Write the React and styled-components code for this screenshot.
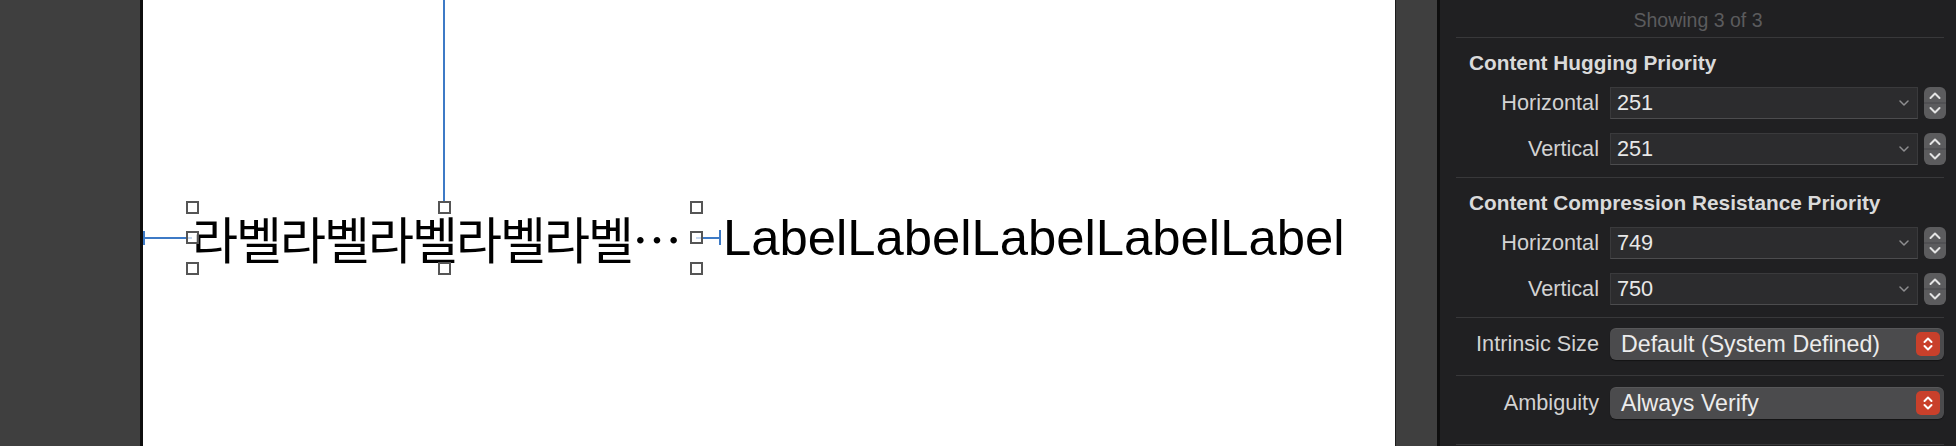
import styled, { createGlobalStyle } from "styled-components";

const GlobalStyle = createGlobalStyle`
  html, body {
    margin: 0;
    padding: 0;
    background: #202022;
  }
  body {
    font-family: "Liberation Sans", Arial, sans-serif;
  }
`;

const BLUE = "#3d7ac6";

const Window = styled.div`
  display: flex;
  width: 1956px;
  height: 446px;
  overflow: hidden;
`;

const Gutter = styled.div`
  flex: none;
  width: ${(p) => p.$width}px;
  background: #3f3f3f;
  border-left: ${(p) => p.$left || 0}px solid #1b1b1b;
  border-right: ${(p) => p.$right || 0}px solid #0e0e0e;
`;

const Canvas = styled.div`
  flex: none;
  width: 1252px;
  box-sizing: border-box;
  padding-top: 207px;
  background: #ffffff;
`;

const LabelRow = styled.div`
  display: flex;
  align-items: center;
  height: 61px;
`;

const Constraint = styled.div`
  flex: none;
  width: ${(p) => p.$width}px;
  height: ${(p) => p.$tick}px;
  box-sizing: border-box;
  margin-right: ${(p) => p.$gap || 0}px;
  background: linear-gradient(${BLUE}, ${BLUE}) center / 100% 2px no-repeat;
  border-${(p) => p.$side}: 2px solid ${BLUE};
`;

const SelectedLabel = styled.div`
  position: relative;
  flex: none;
  width: 504px;
  height: 61px;
  display: flex;
  align-items: center;
`;

const TopConstraint = styled.span`
  position: absolute;
  left: calc(50% - 1px);
  top: -207px;
  width: 2px;
  height: 201px;
  background: ${BLUE};
`;

const KoreanText = styled.span`
  display: block;
  font-family: "Noto Sans CJK KR", sans-serif;
  font-size: 50px;
  letter-spacing: -2px;
  line-height: 61px;
  color: #000;
  white-space: nowrap;
`;

const Handle = styled.span`
  position: absolute;
  left: calc(${(p) => p.$x}% - 6.5px);
  top: calc(${(p) => p.$y}% - 6.5px);
  width: 13px;
  height: 13px;
  box-sizing: border-box;
  border: 2px solid #555555;
  background: rgba(255, 255, 255, 0.7);
`;

const LatinLabel = styled.span`
  flex: none;
  font-family: "Liberation Sans", Arial, sans-serif;
  font-size: 50.8px;
  line-height: 61px;
  color: #000;
  white-space: nowrap;
`;

const Inspector = styled.div`
  flex: 1;
  display: flex;
  flex-direction: column;
  background: #202022;
`;

const ShowingHeader = styled.div`
  height: 37px;
  box-sizing: border-box;
  padding-top: 3px;
  display: flex;
  align-items: center;
  justify-content: center;
  font-size: 19.5px;
  color: #5b5b5d;
`;

const Divider = styled.div`
  height: 1px;
  margin: 0 12px 0 16px;
  background: #38383a;
`;

const Section = styled.div`
  padding: ${(p) => p.$top}px 0 ${(p) => p.$bottom}px;
`;

const SectionTitle = styled.div`
  padding-left: 29px;
  font-size: 20.8px;
  font-weight: bold;
  line-height: 24px;
  color: #dadada;
`;

const Rows = styled.div`
  display: flex;
  flex-direction: column;
  gap: 14px;
  margin-top: 12px;
`;

const Row = styled.div`
  display: flex;
  align-items: center;
  height: 32px;
  padding-left: 16px;
`;

const RowLabel = styled.div`
  flex: none;
  width: 143px;
  margin-right: 11px;
  text-align: right;
  font-size: 21.7px;
  color: #d2d2d2;
  white-space: nowrap;
`;

const ComboField = styled.div`
  flex: none;
  width: 308px;
  height: 32px;
  box-sizing: border-box;
  display: flex;
  align-items: center;
  justify-content: space-between;
  padding: 0 8px 0 6px;
  background: #2c2c2e;
  border: 1px solid #3a3a3c;
  border-bottom-color: #4c4c4e;
  font-size: 21.7px;
  color: #e8e8e8;
`;

const Stepper = styled.div`
  flex: none;
  display: flex;
  margin-left: 6px;
`;

const PopupButton = styled.div`
  flex: none;
  width: 334px;
  height: 32px;
  box-sizing: border-box;
  display: flex;
  align-items: center;
  justify-content: space-between;
  padding: 0 4px 0 11px;
  border-radius: 6px;
  background: #4b4b4d;
  box-shadow: inset 0 1px 0 rgba(255, 255, 255, 0.07), 0 1px 1px rgba(0, 0, 0, 0.4);
  font-size: 23.2px;
  color: #ececec;
  white-space: nowrap;
`;

const ChevronDown = () => (
  <svg width="10" height="6" viewBox="0 0 10 6">
    <path d="M1 1l4 4 4-4" fill="none" stroke="#8e8e90" strokeWidth="1.5" strokeLinecap="round" strokeLinejoin="round" />
  </svg>
);

const StepperIcon = () => (
  <svg width="22" height="32" viewBox="0 0 22 32">
    <rect x="0" y="0" width="22" height="32" rx="6" fill="#5c5c5e" />
    <line x1="0" y1="16" x2="22" y2="16" stroke="#47474a" strokeWidth="1" />
    <path d="M6.5 11l4.5-4.5 4.5 4.5" fill="none" stroke="#e4e4e4" strokeWidth="2" strokeLinecap="round" strokeLinejoin="round" />
    <path d="M6.5 21l4.5 4.5 4.5-4.5" fill="none" stroke="#e4e4e4" strokeWidth="2" strokeLinecap="round" strokeLinejoin="round" />
  </svg>
);

const PopupArrows = () => (
  <svg width="24" height="24" viewBox="0 0 24 24">
    <rect x="0" y="0" width="24" height="24" rx="5" fill="#c9402b" />
    <path d="M8.5 10l3.5-3.5 3.5 3.5" fill="none" stroke="#ffffff" strokeWidth="2" strokeLinecap="round" strokeLinejoin="round" />
    <path d="M8.5 14l3.5 3.5 3.5-3.5" fill="none" stroke="#ffffff" strokeWidth="2" strokeLinecap="round" strokeLinejoin="round" />
  </svg>
);

const PriorityRow = ({ label, value }) => (
  <Row>
    <RowLabel>{label}</RowLabel>
    <ComboField>
      <span>{value}</span>
      <ChevronDown />
    </ComboField>
    <Stepper>
      <StepperIcon />
    </Stepper>
  </Row>
);

const PopupRow = ({ label, value }) => (
  <Row>
    <RowLabel>{label}</RowLabel>
    <PopupButton>
      <span>{value}</span>
      <PopupArrows />
    </PopupButton>
  </Row>
);

const handles = [
  [0, 0], [50, 0], [100, 0],
  [0, 50], [100, 50],
  [0, 100], [50, 100], [100, 100],
];

export default function App() {
  return (
    <Window>
      <GlobalStyle />
      <Gutter $width={140} $right={3} />
      <Canvas>
        <LabelRow>
          <Constraint $width={49} $tick={14} $side="left" />
          <SelectedLabel>
            <TopConstraint />
            <KoreanText>라벨라벨라벨라벨라벨⋯</KoreanText>
            {handles.map(([x, y]) => (
              <Handle key={`${x}-${y}`} $x={x} $y={y} />
            ))}
          </SelectedLabel>
          <Constraint $width={25} $tick={15} $side="right" $gap={2} />
          <LatinLabel>LabelLabelLabelLabelLabel</LatinLabel>
        </LabelRow>
      </Canvas>
      <Gutter $width={41} $left={1} $right={3} />
      <Inspector>
        <ShowingHeader>Showing 3 of 3</ShowingHeader>
        <Divider />
        <Section $top={13} $bottom={12}>
          <SectionTitle>Content Hugging Priority</SectionTitle>
          <Rows>
            <PriorityRow label="Horizontal" value="251" />
            <PriorityRow label="Vertical" value="251" />
          </Rows>
        </Section>
        <Divider />
        <Section $top={13} $bottom={12}>
          <SectionTitle>Content Compression Resistance Priority</SectionTitle>
          <Rows>
            <PriorityRow label="Horizontal" value="749" />
            <PriorityRow label="Vertical" value="750" />
          </Rows>
        </Section>
        <Divider />
        <Section $top={10} $bottom={15}>
          <PopupRow label="Intrinsic Size" value="Default (System Defined)" />
        </Section>
        <Divider />
        <Section $top={11} $bottom={25}>
          <PopupRow label="Ambiguity" value="Always Verify" />
        </Section>
        <Divider />
      </Inspector>
    </Window>
  );
}
